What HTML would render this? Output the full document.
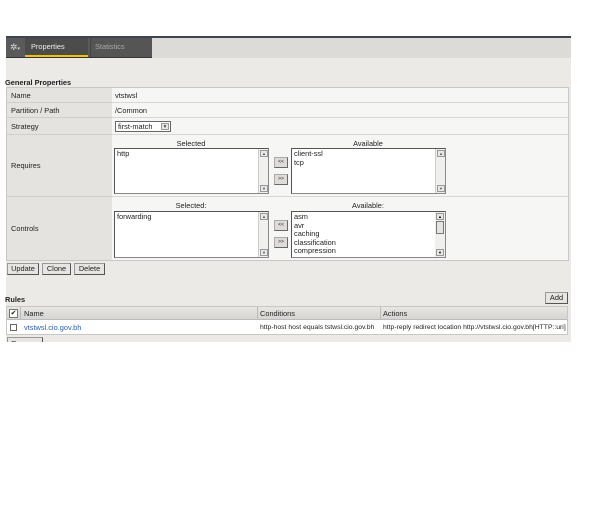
<!DOCTYPE html><html><head><style>
*{margin:0;padding:0;box-sizing:border-box}
body{width:600px;height:506px;background:#fff;font-family:"Liberation Sans",sans-serif;font-size:7.4px;color:#222;position:relative;overflow:hidden}
.a{position:absolute}
.lab{background:#e4e3df;border-bottom:1px solid #d0cfcb;padding-left:4px}
.val{background:#f6f6f4;border-bottom:1px solid #d8d7d3;padding-left:3px}
.lb{background:#fff;border:1px solid #888;border-top-color:#555;border-left-color:#555;padding:1px 2px;line-height:8.6px}
.sb{background:#f0f0ee;border-left:1px solid #ccc}
.btn{background:#e6e5e1;border:1px solid #999;border-right-color:#555;border-bottom-color:#555;text-align:center;font-size:7.4px;line-height:10px}
.sm{background:#dddcd8;border:1px solid #aaa;border-right-color:#666;border-bottom-color:#666;text-align:center;font-size:5px;line-height:9px}
.ar{background:#e8e8e6;border:1px solid #999;font-size:4px;text-align:center;line-height:6px;color:#555}
</style></head><body>
<div class="a" style="left:6px;top:37px;width:565px;height:305px;background:#ebeae6"></div>
<div class="a" style="left:6px;top:36px;width:565px;height:2px;background:#3c4550"></div>
<div class="a" style="left:152px;top:38px;width:419px;height:20px;background:#dcdbd7"></div>
<div class="a" style="left:6px;top:38px;width:146px;height:20px;background:#5a5a5a;border-bottom:1px solid #333"></div>
<div class="a" style="left:6px;top:38px;width:19px;height:19px;color:#ddd;font-size:9px;line-height:19px;padding-left:4px">✲<span style="font-size:5px">▾</span></div>
<div class="a" style="left:25px;top:38px;width:63px;height:19px;background:#4c4c4c;color:#eee;line-height:17px;padding-left:6px">Properties</div>
<div class="a" style="left:25px;top:55px;width:63px;height:2px;background:#f0c400"></div>
<div class="a" style="left:90px;top:38px;width:62px;height:19px;background:#555;color:#aaa;line-height:17px;padding-left:4px;border-left:1px solid #444">Statistics</div>
<div class="a" style="left:5px;top:78px;font-weight:bold">General Properties</div>
<div class="a" style="left:6px;top:87px;width:563px;height:174px;border:1px solid #c8c7c3;background:#f6f6f4"></div>
<div class="a lab" style="left:7px;top:88px;width:105px;height:15px;line-height:15px">Name</div>
<div class="a val" style="left:112px;top:88px;width:456px;height:15px;line-height:15px">vtstwsl</div>
<div class="a lab" style="left:7px;top:103px;width:105px;height:15px;line-height:15px">Partition / Path</div>
<div class="a val" style="left:112px;top:103px;width:456px;height:15px;line-height:15px">/Common</div>
<div class="a lab" style="left:7px;top:118px;width:105px;height:17px;line-height:17px">Strategy</div>
<div class="a val" style="left:112px;top:118px;width:456px;height:17px"></div>
<div class="a" style="left:115px;top:121px;width:56px;height:11px;background:#fff;border:1px solid #666;line-height:9px;padding-left:2px">first-match<span class="ar a" style="right:1px;top:1px;width:8px;height:7px;font-size:5px">▼</span></div>
<div class="a lab" style="left:7px;top:135px;width:105px;height:62px;line-height:62px">Requires</div>
<div class="a val" style="left:112px;top:135px;width:456px;height:62px"></div>
<div class="a lab" style="left:7px;top:197px;width:105px;height:63px;line-height:63px;border-bottom:none">Controls</div>
<div class="a val" style="left:112px;top:197px;width:456px;height:63px;border-bottom:none"></div>
<div class="a" style="left:114px;top:139px;width:154px;text-align:center">Selected</div>
<div class="a" style="left:291px;top:139px;width:154px;text-align:center">Available</div>
<div class="a lb" style="left:114px;top:148px;width:155px;height:46px">http</div>
<div class="a sb" style="left:258px;top:149px;width:10px;height:44px"><div class="ar a" style="left:1px;top:1px;width:8px;height:7px">▲</div><div class="ar a" style="left:1px;bottom:1px;width:8px;height:7px">▼</div></div>
<div class="a lb" style="left:291px;top:148px;width:155px;height:46px">client-ssl<br>tcp</div>
<div class="a sb" style="left:435px;top:149px;width:10px;height:44px"><div class="ar a" style="left:1px;top:1px;width:8px;height:7px">▲</div><div class="ar a" style="left:1px;bottom:1px;width:8px;height:7px">▼</div></div>
<div class="a sm" style="left:274px;top:157px;width:14px;height:11px">&lt;&lt;</div>
<div class="a sm" style="left:274px;top:174px;width:14px;height:11px">&gt;&gt;</div>
<div class="a" style="left:114px;top:201px;width:154px;text-align:center">Selected:</div>
<div class="a" style="left:291px;top:201px;width:154px;text-align:center">Available:</div>
<div class="a lb" style="left:114px;top:211px;width:155px;height:47px">forwarding</div>
<div class="a sb" style="left:258px;top:212px;width:10px;height:45px"><div class="ar a" style="left:1px;top:1px;width:8px;height:7px">▲</div><div class="ar a" style="left:1px;bottom:1px;width:8px;height:7px">▼</div></div>
<div class="a lb" style="left:291px;top:211px;width:155px;height:47px">asm<br>avr<br>caching<br>classification<br>compression</div>
<div class="a" style="left:435px;top:212px;width:10px;height:45px;background:#f0f0ee"><div class="ar a" style="left:1px;top:1px;width:8px;height:7px;color:#000">▲</div><div class="a" style="left:1px;top:9px;width:8px;height:13px;background:#e4e4e2;border:1px solid #777"></div><div class="ar a" style="left:1px;bottom:1px;width:8px;height:7px;color:#000">▼</div></div>
<div class="a sm" style="left:274px;top:220px;width:14px;height:11px">&lt;&lt;</div>
<div class="a sm" style="left:274px;top:237px;width:14px;height:11px">&gt;&gt;</div>
<div class="a btn" style="left:7px;top:263px;width:32px;height:12px">Update</div>
<div class="a btn" style="left:42px;top:263px;width:29px;height:12px">Clone</div>
<div class="a btn" style="left:74px;top:263px;width:31px;height:12px">Delete</div>
<div class="a" style="left:5px;top:295px;font-weight:bold">Rules</div>
<div class="a btn" style="left:545px;top:292px;width:23px;height:12px">Add</div>
<div class="a" style="left:6px;top:306px;width:562px;height:29px;border:1px solid #c8c7c3;background:#fff"></div>
<div class="a" style="left:7px;top:307px;width:560px;height:13px;background:linear-gradient(#e8e7e3,#d6d5d1);border-bottom:1px solid #bbb"></div>
<div class="a" style="left:9px;top:309px;width:9px;height:9px;background:#fff;border:1px solid #777;font-size:7px;line-height:7px;text-align:center">✔</div>
<div class="a" style="left:20px;top:307px;width:1px;height:13px;background:#bbb"></div>
<div class="a" style="left:24px;top:307px;line-height:13px">Name</div>
<div class="a" style="left:257px;top:307px;width:1px;height:13px;background:#bbb"></div>
<div class="a" style="left:260px;top:307px;line-height:13px">Conditions</div>
<div class="a" style="left:380px;top:307px;width:1px;height:13px;background:#bbb"></div>
<div class="a" style="left:383px;top:307px;line-height:13px">Actions</div>
<div class="a" style="left:10px;top:324px;width:7px;height:7px;border:1px solid #666;background:#fff"></div>
<div class="a" style="left:24px;top:321px;line-height:13px;color:#2a5db0">vtstwsl.cio.gov.bh</div>
<div class="a" style="left:260px;top:321px;line-height:13px;font-size:6.8px">http-host host equals tstwsl.cio.gov.bh</div>
<div class="a" style="left:383px;top:321px;line-height:13px;font-size:6.8px;white-space:nowrap">http-reply redirect location http://vtstwsl.cio.gov.bh[HTTP::uri]</div>
<div class="a btn" style="left:7px;top:337px;width:36px;height:12px;line-height:12px">Remove</div>
<div class="a" style="left:0;top:342px;width:600px;height:164px;background:#fff"></div>
</body></html>
